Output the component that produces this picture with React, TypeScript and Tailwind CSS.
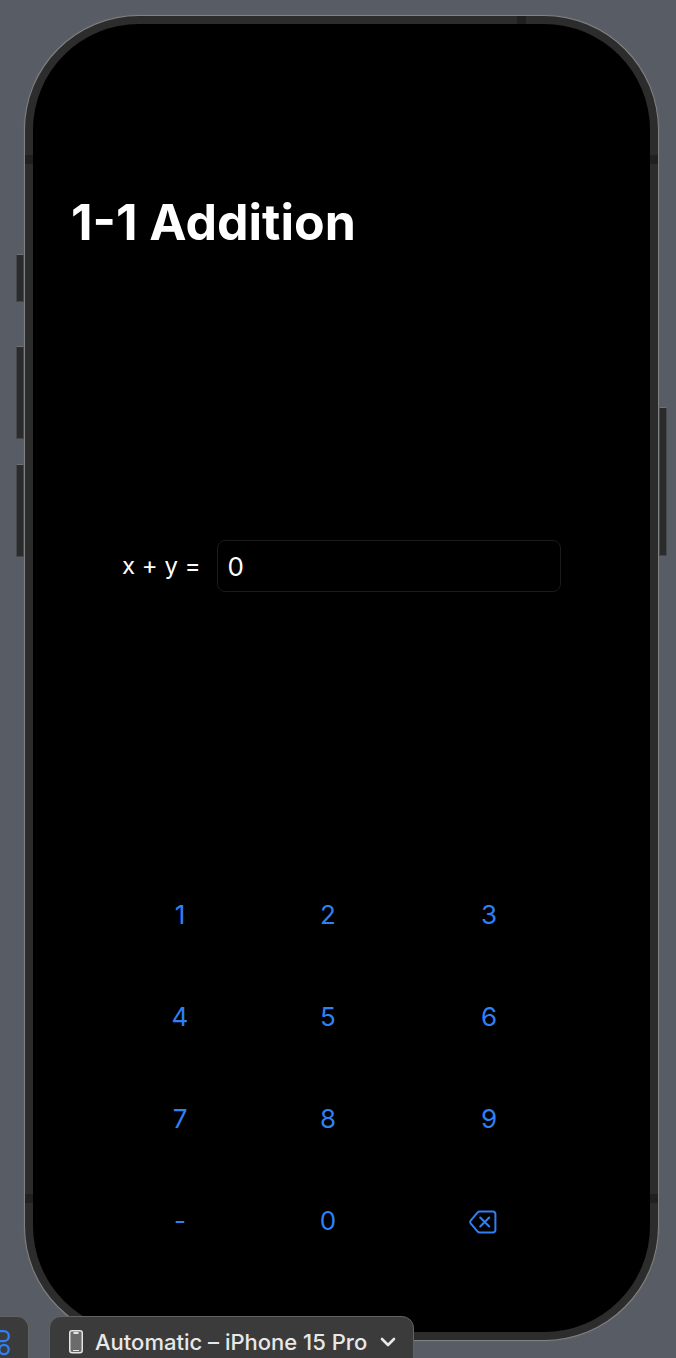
import React, { useState } from "react";

const keys = ["1", "2", "3", "4", "5", "6", "7", "8", "9", "-", "0", "delete"];

function DeleteIcon() {
  return (
    <svg className="mt-1" width="28" height="24" viewBox="0 0 28 24" fill="none" stroke="currentColor" strokeWidth="2" strokeLinecap="round" strokeLinejoin="round">
      <path d="M10.5 1.5H24a2.4 2.4 0 0 1 2.4 2.4v16.2A2.4 2.4 0 0 1 24 22.500H10.500Q9.600 22.500 8.900 21.800L1.600 13.300Q0.800 12 1.600 10.700L8.900 2.200Q9.600 1.500 10.500 1.500Z" />
      <path d="M11.200 7.500l9 9M20.200 7.500l-9 9" />
    </svg>
  );
}

function PhoneIcon() {
  return (
    <svg width="14" height="24" viewBox="0 0 14 24" fill="none" stroke="#e4e4e4">
      <rect x="0.750" y="0.750" width="12.500" height="22" rx="2.200" fill="#6b6b6b" strokeWidth="1.500" />
      <path d="M4.500 3h5" strokeWidth="2" />
      <path d="M4 20.500h6" strokeWidth="1" />
    </svg>
  );
}

function PanelIcon() {
  return (
    <svg className="shrink-0" width="28" height="27" viewBox="0 0 28 27" fill="none" stroke="#2f80f5" strokeWidth="2.300">
      <rect x="1.200" y="1.200" width="25.600" height="10" rx="5" />
      <circle cx="22" cy="19.500" r="4.700" />
      <path d="M17.500 15.300h-11a4.200 4.200 0 0 0 0 8.400h11" />
    </svg>
  );
}

const sideButton = "absolute w-2 border border-[#45484c] border-t-[#707376] bg-[#2b2b2b]";
const band = "absolute bg-[#202020]";

export default function App() {
  const [answer, setAnswer] = useState("0");

  const press = (key: string) => {
    setAnswer((value) => {
      if (key === "delete") return value.slice(0, -1) || "0";
      return value === "0" ? key : value + key;
    });
  };

  return (
    <div className="relative flex min-h-screen flex-col overflow-hidden bg-[#585d65] pt-[14px] pr-4 pb-4 pl-[23px] font-['Inter',sans-serif]">
      <div className="relative flex flex-1 flex-col rounded-[116px] border border-[#5c5f63] bg-[#808183] p-px">
        <span className={`${sideButton} -left-2 top-[239px] h-12`} />
        <span className={`${sideButton} -left-2 top-[331px] h-[93px]`} />
        <span className={`${sideButton} -left-2 top-[449px] h-[93px]`} />
        <span className={`${sideButton} -right-2 top-[392px] h-[149px]`} />
        <div className="relative flex flex-1 flex-col rounded-[114px] bg-[#2c2c2c] p-2">
          <span className={`${band} right-[132px] top-0 h-2 w-[9px]`} />
          <span className={`${band} left-0 top-[139px] h-[9px] w-2`} />
          <span className={`${band} right-0 top-[139px] h-[9px] w-2`} />
          <span className={`${band} bottom-[137px] left-0 h-[9px] w-2`} />
          <span className={`${band} right-0 bottom-[137px] h-[9px] w-2`} />
          <main className="flex flex-1 flex-col rounded-[106px] bg-black pb-[61px] text-white">
            <h1 className="px-[38px] pt-[168px] text-[50px] leading-[60px] font-bold">1-1 Addition</h1>
            <form className="mx-[89px] mt-[288px] flex items-center gap-4" onSubmit={(e) => e.preventDefault()}>
              <label htmlFor="answer" className="shrink-0 text-[24px]">x + y =</label>
              <input
                id="answer"
                value={answer}
                onChange={(e) => setAnswer(e.target.value)}
                className="h-[52px] min-w-0 flex-1 rounded-lg border border-[#1b1b1b] bg-black px-[10px] text-[26px] outline-none"
              />
            </form>
            <div className="mt-auto grid auto-rows-[102px] grid-cols-[148fr_148fr_175fr] px-[73px] text-[26px] text-[#2f80f5]">
              {keys.map((key, i) => (
                <button
                  key={key}
                  type="button"
                  aria-label={key === "delete" ? "Delete" : undefined}
                  onClick={() => press(key)}
                  className={i % 3 === 2 ? "flex items-center justify-end pr-20" : "flex items-center justify-center"}
                >
                  {key === "delete" ? <DeleteIcon /> : key}
                </button>
              ))}
            </div>
          </main>
        </div>
      </div>

      <button type="button" aria-label="Device settings" className="absolute -bottom-3 left-0 flex h-[54px] w-[29px] items-start justify-end rounded-tr-xl border border-l-0 border-[#626262] bg-[#3b3b3b] pt-[13px] pr-[18px]">
        <PanelIcon />
      </button>
      <button type="button" className="absolute -bottom-3 left-[49px] flex h-[54px] items-start rounded-t-xl border border-[#626262] bg-[#3b3b3b] pt-[13px] pr-[17px] pl-[19px] text-[22px] leading-6 font-medium text-[#e8e8e8]">
        <PhoneIcon />
        <span className="ml-3">Automatic – iPhone 15 Pro</span>
        <svg className="mt-[7px] ml-[13px]" width="16" height="11" viewBox="0 0 16 11" fill="none" stroke="currentColor" strokeWidth="2.600" strokeLinecap="round" strokeLinejoin="round">
          <path d="M2 2l6 6 6-6" />
        </svg>
      </button>
    </div>
  );
}
